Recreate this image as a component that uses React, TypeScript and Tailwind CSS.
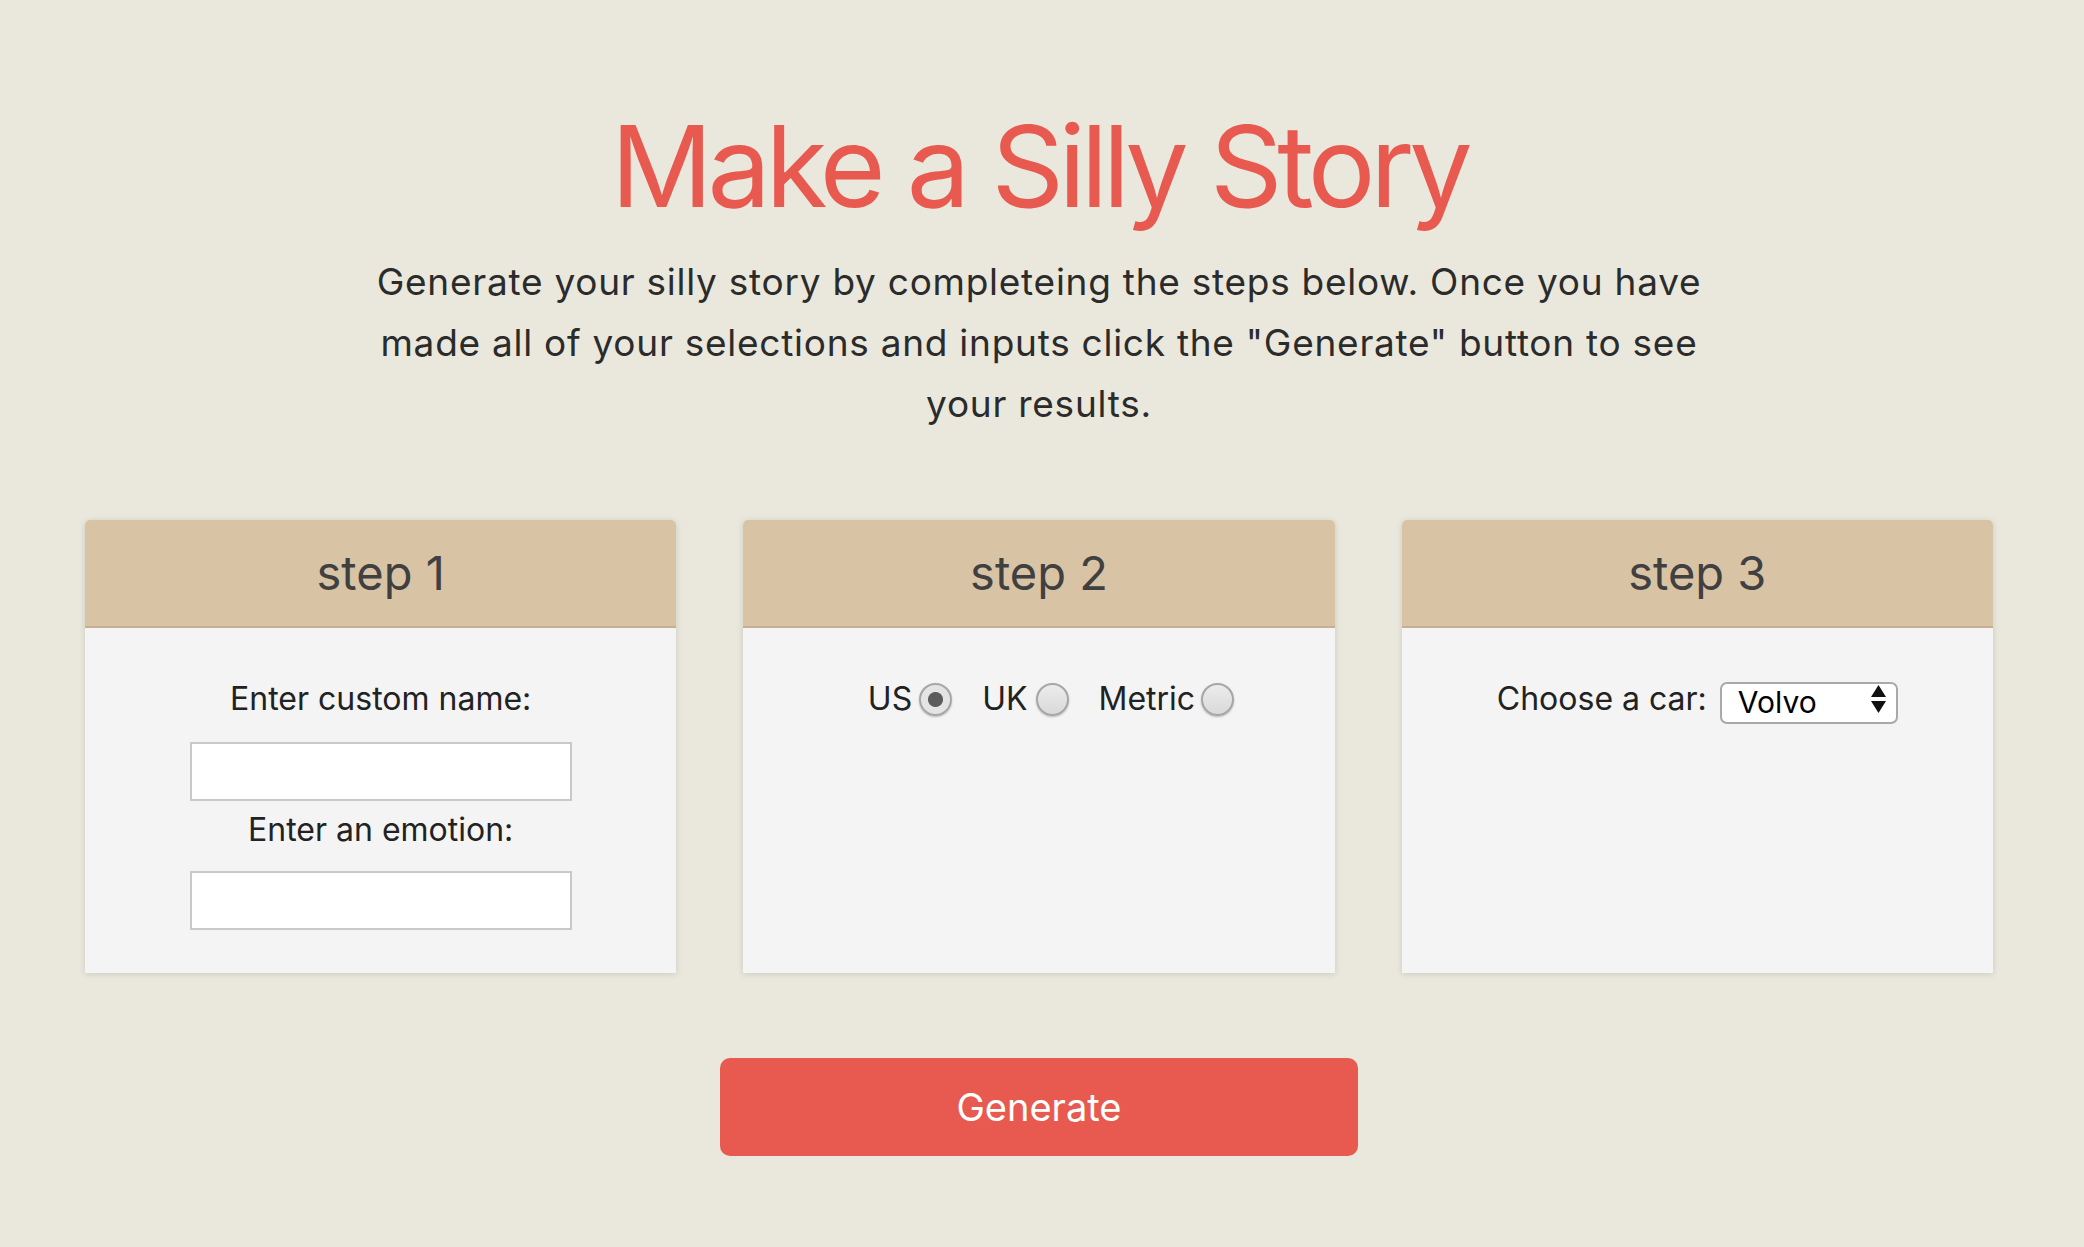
export default function App() {
  return (
    <div className="min-h-screen bg-[#eae7dc] font-[Inter,sans-serif]">
      <div className="flex w-[2078px] flex-col items-center pb-[92px]">
        <h1 className="mt-[110px] text-[113px] leading-[113px] tracking-[-0.047em] text-[#e85a4f]">
          Make a Silly Story
        </h1>
        <p className="mt-[28px] whitespace-nowrap text-center text-[37px] leading-[61px] tracking-[0.02em] text-[#2b2b2b]">
          Generate your silly story by completeing the steps below. Once you have
          <br />
          made all of your selections and inputs click the "Generate" button to see
          <br />
          your results.
        </p>

        {/* Steps */}
        <div className="mt-[86px] grid w-[1908px] grid-cols-3 gap-[67px]">
          <Card title="step 1">
            <label className="text-[32px] leading-[40px] text-[#222]">Enter custom name:</label>
            <input type="text" className="mt-[23px] h-[59px] w-[382px] border-2 border-[#c9c9c9] bg-white px-3 text-[30px] outline-none" />
            <label className="mt-[9px] text-[32px] leading-[40px] text-[#222]">Enter an emotion:</label>
            <input type="text" className="mt-[21px] h-[59px] w-[382px] border-2 border-[#c9c9c9] bg-white px-3 text-[30px] outline-none" />
          </Card>

          <Card title="step 2">
            <div className="flex h-[40px] items-center pl-[24px] text-[32px] text-[#222]">
              <span>US</span>
              <Radio name="units" checked className="ml-[7px]" />
              <span className="ml-[30px]">UK</span>
              <Radio name="units" className="ml-[8px]" />
              <span className="ml-[30px]">Metric</span>
              <Radio name="units" className="ml-[6px]" />
            </div>
          </Card>

          <Card title="step 3">
            <div className="flex h-[40px] items-center text-[32px] text-[#222]">
              <span>Choose a car:</span>
              <div className="relative ml-[13px] h-[42px] w-[178px]">
                <select className="h-full w-full appearance-none rounded-[7px] border-2 border-[#a9a9a9] bg-white pb-[2px] pl-[16px] text-[30px] leading-none text-black outline-none">
                  <option>Volvo</option>
                  <option>Saab</option>
                  <option>Mercedes</option>
                  <option>Audi</option>
                </select>
                <svg
                  width="15"
                  height="28"
                  viewBox="0 0 15 28"
                  className="pointer-events-none absolute right-[12px] top-1/2 -translate-y-1/2"
                >
                  <path d="M0 12L7.5 0L15 12Z" fill="#111" />
                  <path d="M0 16H15L7.5 28Z" fill="#111" />
                </svg>
              </div>
            </div>
          </Card>
        </div>

        <button className="mt-[85px] h-[98px] w-[638px] rounded-[10px] bg-[#e85a4f] text-[38px] text-white">
          Generate
        </button>
      </div>
    </div>
  );
}

function Card({ title, children }: { title: string; children: React.ReactNode }) {
  return (
    <div className="flex flex-col rounded-t-[5px] bg-[#f4f4f4] shadow-[0_1px_6px_rgba(0,0,0,0.13)]">
      <div className="flex h-[108px] items-center justify-center rounded-t-[5px] border-b-2 border-[#c6b095] bg-[#d8c3a5] text-[47px] text-[#404040]">
        {title}
      </div>
      <div className="flex flex-1 flex-col items-center pb-[43px] pt-[51px]">{children}</div>
    </div>
  );
}

function Radio({ name, checked, className }: { name: string; checked?: boolean; className?: string }) {
  return (
    <input
      type="radio"
      name={name}
      defaultChecked={checked}
      className={
        "h-[33px] w-[33px] appearance-none rounded-full border-2 border-[#a6a6a6] bg-[linear-gradient(#ececec,#d9d9d9)] shadow-[0_1px_2px_rgba(0,0,0,0.25)] checked:bg-[radial-gradient(circle,#5c5c5c_0_7px,#e4e4e4_8px)] " +
        (className ?? "")
      }
    />
  );
}
